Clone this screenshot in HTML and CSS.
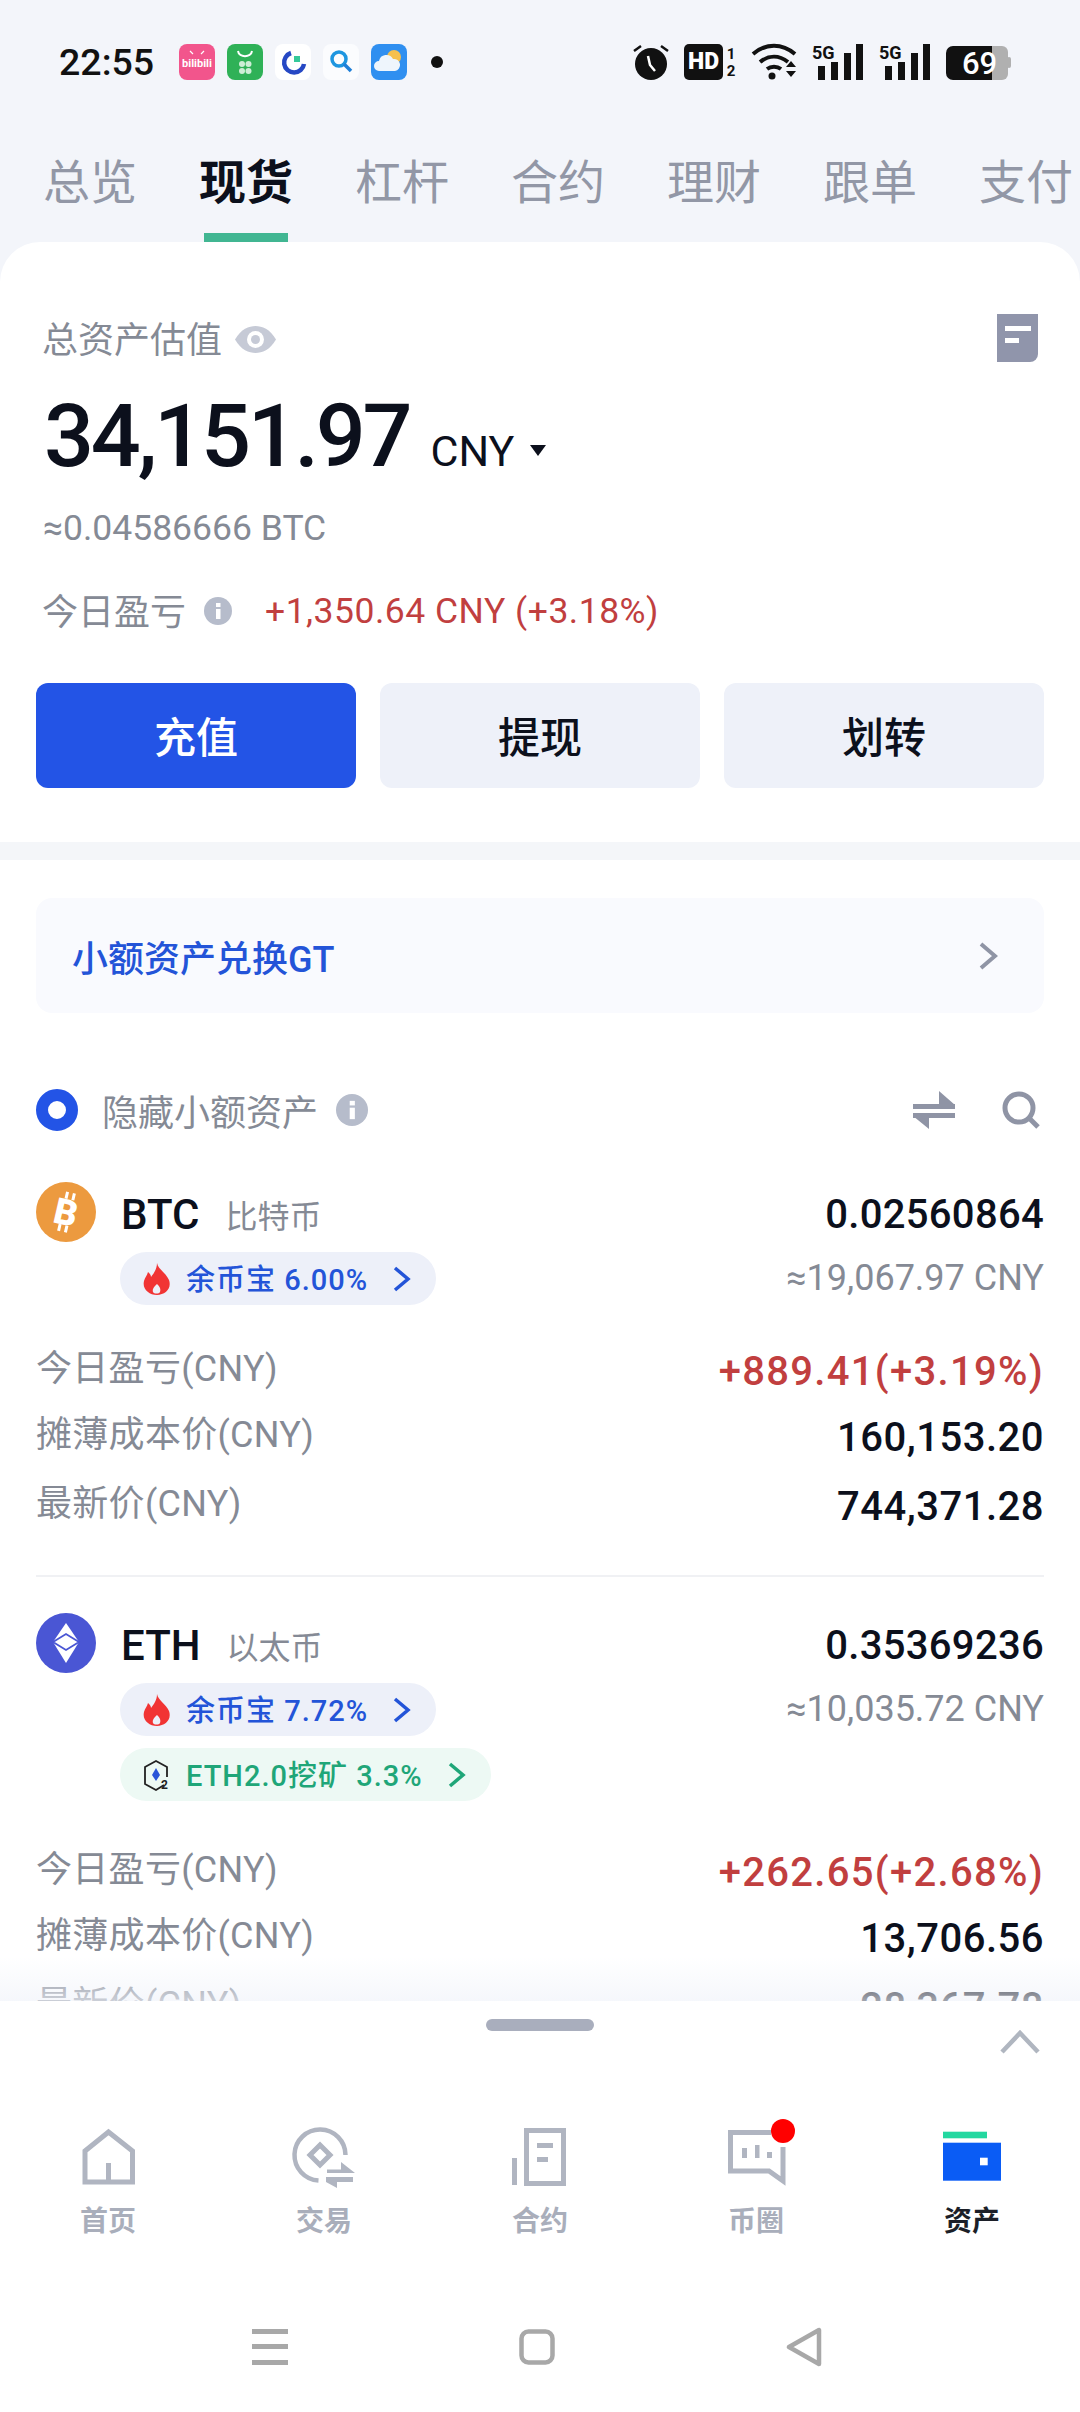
FILE: index.html
```html
<!DOCTYPE html>
<html lang="zh-CN">
<head>
    <meta charset="UTF-8">
    <meta name="viewport" content="width=device-width, initial-scale=1.0">
    <title>资产</title>
    <link rel="stylesheet" href="styles.css">
</head>
<body>
<div class="phone">
    <!-- Status bar -->
    <div class="status">
        <span class="time">22:55</span>
        <div class="app_icons">
            <svg class="app" viewBox="0 0 36 36"><rect width="36" height="36" rx="8" fill="#f2558c"/><path d="M11 7l3 3M25 7l-3 3" stroke="#fff" stroke-width="1.2"/><text x="18" y="23" class="bili">bilibili</text></svg>
            <svg class="app" viewBox="0 0 36 36"><rect width="36" height="36" rx="8" fill="#2fb157"/><path d="M11 7c1 7 13 7 14 0" fill="none" stroke="#fff" stroke-width="2"/><g fill="#cdeed6"><circle cx="15" cy="20" r="3"/><circle cx="21.500" cy="20" r="3"/><circle cx="15" cy="27" r="3"/><circle cx="21.500" cy="27" r="3"/></g></svg>
            <svg class="app" viewBox="0 0 36 36"><rect width="36" height="36" rx="8" fill="#fff"/><path d="M16 9a10 10 0 1 0 13 11" fill="none" stroke="#2648c4" stroke-width="4.500"/><rect x="19" y="12" width="6" height="6" fill="#35c99a"/></svg>
            <svg class="app" viewBox="0 0 36 36"><rect width="36" height="36" rx="8" fill="#fbfcfe"/><circle cx="16" cy="15" r="7" fill="none" stroke="#1e96e0" stroke-width="3.500"/><path d="M21 20l7 7" stroke="#1e7fd8" stroke-width="3.500"/></svg>
            <svg class="app" viewBox="0 0 36 36"><rect width="36" height="36" rx="8" fill="#2f8ff0"/><circle cx="23" cy="13" r="7" fill="#f6c04d"/><path d="M8 27a5 5 0 0 1 0-10 7.500 7.500 0 0 1 14-2 6 6 0 0 1 2 12z" fill="#eef5fc"/></svg>
            <span class="dot"></span>
        </div>
        <div class="sys_icons">
            <svg width="36" height="36" viewBox="0 0 36 36"><path d="M1 7l7-5M35 7l-7-5" stroke="#111" stroke-width="2.500"/><circle cx="18" cy="20" r="16" fill="#111"/><path d="M15 12l2 9 5 6" fill="none" stroke="#fff" stroke-width="2.500"/></svg>
            <svg width="52" height="36" viewBox="0 0 52 36"><rect width="39" height="36" rx="5" fill="#111"/><text x="19.500" y="25" class="hd">HD</text><text x="47" y="15" class="hd_num">1</text><text x="47" y="32" class="hd_num">2</text></svg>
            <svg width="46" height="38" viewBox="0 0 46 38"><g fill="none" stroke="#111" stroke-width="4"><path d="M2 11c13-11 29-11 42 0"/><path d="M9 19c9-7 19-7 28 0"/><path d="M16 26c4-3 10-3 14 0"/></g><circle cx="21" cy="33" r="3.500" fill="#111"/><path d="M35 24l5-6 5 6zM35 28l5 6 5-6z" fill="#111"/></svg>
            <svg class="signal" width="52" height="40" viewBox="0 -4 52 40"><text x="0" y="15" class="five_g">5G</text><g fill="#111"><rect x="6" y="22" width="7" height="14"/><rect x="19" y="18" width="7" height="18"/><rect x="32" y="9" width="7" height="27"/><rect x="44" y="0" width="7" height="36"/></g></svg>
            <svg class="signal" width="52" height="40" viewBox="0 -4 52 40"><text x="0" y="15" class="five_g">5G</text><g fill="#111"><rect x="6" y="22" width="7" height="14"/><rect x="19" y="18" width="7" height="18"/><rect x="32" y="9" width="7" height="27"/><rect x="44" y="0" width="7" height="36"/></g></svg>
            <svg class="battery" width="66" height="42" viewBox="0 0 66 42"><rect x="30" y="2" width="32" height="34" rx="6" fill="#b0b0b0"/><rect x="61" y="13" width="4" height="11" rx="2" fill="#b0b0b0"/><path d="M7 2h39v34H7a7 7 0 0 1-7-7V9a7 7 0 0 1 7-7z" fill="#111"/><text x="16" y="30" class="batt">69</text></svg>
        </div>
    </div>

    <!-- Tabs -->
    <div class="tabs">
        <div class="tab">总览</div>
        <div class="tab active">现货<span class="tab_bar"></span></div>
        <div class="tab">杠杆</div>
        <div class="tab">合约</div>
        <div class="tab">理财</div>
        <div class="tab">跟单</div>
        <div class="tab">支付</div>
    </div>

    <div class="card">
        <!-- Balance overview -->
        <div class="overview">
            <div class="total_row">
                <div class="total_left">
                    <span class="label">总资产估值</span>
                    <svg class="eye" width="41" height="27" viewBox="0 0 41 27"><path d="M0 13.500C6 3 14 0 20.500 0S35 3 41 13.500C35 24 27 27 20.500 27S6 24 0 13.500z" fill="#c6cad6"/><circle cx="20.500" cy="13.500" r="8.500" fill="#fff"/><circle cx="20.500" cy="13.500" r="4.500" fill="#c6cad6"/></svg>
                </div>
                <svg width="41" height="48" viewBox="0 0 41 48"><path d="M0 0h41v40a8 8 0 0 1-8 8H0z" fill="#9095ab"/><rect x="8" y="12" width="26" height="5" fill="#fff"/><rect x="8" y="24" width="14" height="5" fill="#fff"/></svg>
            </div>
            <div class="amount_row">
                <span class="amount">34,151.97</span>
                <span class="currency">CNY</span>
                <span class="caret"></span>
            </div>
            <div class="label btc_value">≈0.04586666 BTC</div>
            <div class="pnl_row">
                <span class="label">今日盈亏</span>
                <svg class="info" width="28" height="28" viewBox="0 0 28 28"><circle cx="14" cy="14" r="14" fill="#b6bccb"/><rect x="12" y="12" width="4.500" height="10" fill="#fff"/><rect x="12" y="6" width="4.500" height="4" fill="#fff"/></svg>
                <span class="pnl_value">+1,350.64 CNY (+3.18%)</span>
            </div>
            <div class="actions">
                <div class="btn primary">充值</div>
                <div class="btn">提现</div>
                <div class="btn">划转</div>
            </div>
        </div>

        <div class="section_gap"></div>

        <!-- Asset list -->
        <div class="assets">
            <div class="convert">
                <span>小额资产兑换GT</span>
                <svg width="20" height="28" viewBox="0 0 20 28"><path d="M3 2l14 12L3 26" fill="none" stroke="#8f94a5" stroke-width="4"/></svg>
            </div>

            <div class="filter_row">
                <div class="filter_left">
                    <span class="radio"></span>
                    <span class="label">隐藏小额资产</span>
                    <svg class="info" width="32" height="32" viewBox="0 0 28 28"><circle cx="14" cy="14" r="14" fill="#b6bccb"/><rect x="12" y="12" width="4.500" height="10" fill="#fff"/><rect x="12" y="6" width="4.500" height="4" fill="#fff"/></svg>
                </div>
                <div class="filter_right">
                    <svg width="42" height="38" viewBox="0 0 42 38"><path d="M0 13h42v5H0zM0 22h42v5H0z" fill="#8f94a5"/><path d="M26 0l16 14H26zM16 38L0 25h16z" fill="#8f94a5"/></svg>
                    <svg width="38" height="38" viewBox="0 0 38 38"><circle cx="17" cy="17" r="14" fill="none" stroke="#8f94a5" stroke-width="5"/><path d="M27 27l9 9" stroke="#8f94a5" stroke-width="5"/></svg>
                </div>
            </div>

            <div class="asset">
                <div class="asset_head">
                    <svg class="coin" viewBox="0 0 60 60"><circle cx="30" cy="30" r="30" fill="#ec9a3f"/><g transform="rotate(13 30 30)"><path d="M27 10v7M34 10v7M27 43v7M34 43v7" stroke="#fff" stroke-width="3"/><text x="30" y="43" class="btc_b">B</text></g></svg>
                    <div class="asset_left">
                        <div class="name_row"><span class="symbol">BTC</span><span class="coin_name">比特币</span></div>
                        <div class="pill blue">
                            <svg class="flame" viewBox="0 0 27 32"><path d="M14 0c1 6 9 10 12 17 3 9-4 15-12 15S-1 26 1 18c1-4 3-5 4-9 2 2 3 3 3 5 3-4 6-8 6-14z" fill="#f13434"/><path d="M14 21c3 3 4 5 3 8-1 2-6 2-7 0-1-3 1-5 4-8z" fill="#edf0f9"/></svg>
                            <span class="pill_text">余币宝 6.00%</span>
                            <svg class="pill_arrow" viewBox="0 0 18 26"><path d="M2 2l13 11L2 24" fill="none" stroke="currentColor" stroke-width="3.500"/></svg>
                        </div>
                    </div>
                    <div class="asset_right">
                        <div class="qty">0.02560864</div>
                        <div class="label approx">≈19,067.97 CNY</div>
                    </div>
                </div>
                <div class="details">
                    <div class="detail"><span class="label">今日盈亏(CNY)</span><span class="val red">+889.41(+3.19%)</span></div>
                    <div class="detail"><span class="label">摊薄成本价(CNY)</span><span class="val">160,153.20</span></div>
                    <div class="detail last"><span class="label">最新价(CNY)</span><span class="val">744,371.28</span></div>
                </div>
            </div>

            <div class="asset no_line">
                <div class="asset_head">
                    <svg class="coin" viewBox="0 0 60 60"><circle cx="30" cy="30" r="30" fill="#4a56d4"/><path d="M30 10l13 19-13 21-13-21z" fill="#fff"/><path d="M17 29l13-8 13 8-13 8z" fill="#fff" stroke="#4a56d4" stroke-width="1.800"/></svg>
                    <div class="asset_left">
                        <div class="name_row"><span class="symbol">ETH</span><span class="coin_name">以太币</span></div>
                        <div class="pill blue">
                            <svg class="flame" viewBox="0 0 27 32"><path d="M14 0c1 6 9 10 12 17 3 9-4 15-12 15S-1 26 1 18c1-4 3-5 4-9 2 2 3 3 3 5 3-4 6-8 6-14z" fill="#f13434"/><path d="M14 21c3 3 4 5 3 8-1 2-6 2-7 0-1-3 1-5 4-8z" fill="#edf0f9"/></svg>
                            <span class="pill_text">余币宝 7.72%</span>
                            <svg class="pill_arrow" viewBox="0 0 18 26"><path d="M2 2l13 11L2 24" fill="none" stroke="currentColor" stroke-width="3.500"/></svg>
                        </div>
                        <div class="pill green">
                            <svg class="flame" viewBox="0 0 27 32"><path d="M21 26l-8 5-11-6V8l11-6 11 6v10" fill="none" stroke="#222" stroke-width="1.800"/><path d="M13 9l4 7-4 6-4-6z" fill="#2a55d8"/><text x="22" y="30" class="eth_two">2</text></svg>
                            <span class="pill_text">ETH2.0挖矿 3.3%</span>
                            <svg class="pill_arrow" viewBox="0 0 18 26"><path d="M2 2l13 11L2 24" fill="none" stroke="currentColor" stroke-width="3.500"/></svg>
                        </div>
                    </div>
                    <div class="asset_right">
                        <div class="qty">0.35369236</div>
                        <div class="label approx">≈10,035.72 CNY</div>
                    </div>
                </div>
                <div class="details">
                    <div class="detail"><span class="label">今日盈亏(CNY)</span><span class="val red">+262.65(+2.68%)</span></div>
                    <div class="detail"><span class="label">摊薄成本价(CNY)</span><span class="val">13,706.56</span></div>
                    <div class="detail last"><span class="label">最新价(CNY)</span><span class="val">28,367.78</span></div>
                </div>
            </div>
        </div>
    </div>

    <!-- Bottom sheet over the list -->
    <div class="sheet">
        <div class="handle"></div>
        <svg class="sheet_up" width="40" height="24" viewBox="0 0 40 24"><path d="M2 22L20 3l18 19" fill="none" stroke="#b0b6c0" stroke-width="4.500"/></svg>
        <div class="nav">
            <div class="nav_item">
                <svg class="nav_icon" viewBox="0 0 60 60"><path d="M30.500 5L7 24v31h47.500V24z" fill="none" stroke="#b0b5c1" stroke-width="5"/><path d="M30.500 36v19" stroke="#b0b5c1" stroke-width="5"/></svg>
                <span>首页</span>
            </div>
            <div class="nav_item">
                <svg class="nav_icon" viewBox="0 0 60 60"><path d="M51.500 28A25.500 25.500 0 1 0 24.500 53.500" fill="none" stroke="#b0b5c1" stroke-width="4.500"/><path d="M26 18l10 10-10 10-10-10z" fill="none" stroke="#b0b5c1" stroke-width="5"/><path d="M33 42.500h14V35l14 11H33zM32 50h27v5H43v6L32 55z" fill="#b0b5c1"/></svg>
                <span>交易</span>
            </div>
            <div class="nav_item">
                <svg class="nav_icon" viewBox="0 0 60 60"><rect x="16.500" y="3.500" width="37" height="53" fill="none" stroke="#b0b5c1" stroke-width="5"/><g fill="#b0b5c1"><rect x="2" y="31" width="5" height="27"/><rect x="27" y="16" width="16" height="5"/><rect x="27" y="30" width="11" height="5"/></g></svg>
                <span>合约</span>
            </div>
            <div class="nav_item">
                <svg class="nav_icon" viewBox="0 0 60 60"><path d="M45 5.500H4.500V44H43l14 10V20" fill="none" stroke="#b0b5c1" stroke-width="5"/><g fill="#b0b5c1"><rect x="16" y="21" width="5" height="10"/><rect x="29" y="18" width="4.500" height="13"/><rect x="41" y="25" width="5" height="6"/></g><circle cx="57" cy="4" r="12" fill="#f00"/></svg>
                <span>币圈</span>
            </div>
            <div class="nav_item current">
                <svg class="nav_icon" viewBox="0 0 60 60"><rect x="1" y="4.700" width="44" height="6.600" fill="#23d8a0"/><rect x="1" y="15.700" width="58" height="38" fill="#0a5cf5"/><rect x="38" y="30.700" width="7.700" height="7.600" fill="#fff"/></svg>
                <span>资产</span>
            </div>
        </div>
        <div class="sysnav">
            <svg width="36" height="36" viewBox="0 0 36 36"><path d="M0 0h36v5H0zM0 15h36v5H0zM0 31h36v5H0z" fill="#a8a8a8"/></svg>
            <svg width="36" height="36" viewBox="0 0 36 36"><rect x="2.500" y="2.500" width="31" height="31" rx="7" fill="none" stroke="#a8a8a8" stroke-width="4.500"/></svg>
            <svg width="36" height="40" viewBox="0 0 36 40"><path d="M33 3v34L3 20z" fill="none" stroke="#a8a8a8" stroke-width="4.500" stroke-linejoin="round"/></svg>
        </div>
    </div>
</div>
</body>
</html>
```

FILE: styles.css
```css
* {
    margin: 0;
    padding: 0;
    box-sizing: border-box;
}

body {
    background-color: #f3f5fa;
    font-family: Roboto, "Noto Sans CJK SC", sans-serif;
}

.phone {
    position: relative;
    width: 1080px;
    height: 2412px;
    overflow: hidden;
    background-color: #f3f5fa;
}

/* Status bar */
.status {
    display: flex;
    align-items: center;
    height: 124px;
    padding-left: 59px;
}

.time {
    width: 120px;
    font-size: 37.500px;
    font-weight: 500;
    color: #111;
}

.app_icons {
    display: flex;
    align-items: center;
    gap: 12px;
}

.app {
    width: 36px;
    height: 36px;
}

.bili {
    font-size: 11px;
    font-weight: 700;
    fill: #fff;
    text-anchor: middle;
}

.dot {
    width: 12px;
    height: 12px;
    margin-left: 12px;
    border-radius: 50%;
    background-color: #111;
}

.sys_icons {
    display: flex;
    align-items: center;
    gap: 15px;
    margin-left: 190px;
}

/* taller boxes so the glyphs are not clipped, the margins keep the row centered */
.signal {
    margin-top: -4px;
}

.battery {
    margin-bottom: -6px;
}

.hd {
    font-size: 23px;
    font-weight: 900;
    fill: #fff;
    text-anchor: middle;
}

.hd_num {
    font-size: 15px;
    font-weight: 700;
    fill: #111;
    text-anchor: middle;
}

.five_g {
    font-size: 18px;
    font-weight: 700;
    fill: #111;
}

.batt {
    font-size: 31px;
    font-weight: 500;
    fill: #fff;
}

/* Tabs */
.tabs {
    display: flex;
    gap: 62px;
    height: 118px;
    padding-left: 43px;
    overflow: hidden;
}

.tab {
    display: flex;
    flex-direction: column;
    align-items: center;
    flex-shrink: 0;
    padding-top: 27px;
    font-size: 47px;
    line-height: 64px;
    color: #9297a6;
}

.tab.active {
    color: #0c101c;
    font-weight: 700;
}

.tab_bar {
    width: 84px;
    height: 9px;
    margin-top: auto;
    background-color: #41b692;
}

/* Card */
.card {
    background-color: #fff;
    border-radius: 40px 40px 0 0;
}

.label {
    font-size: 36px;
    color: #858a95;
}

.overview {
    height: 600px;
    padding: 72px 36px 0 44px;
}

.total_row {
    display: flex;
    justify-content: space-between;
    align-items: flex-start;
    height: 50px;
    padding-right: 6px;
}

.total_left {
    display: flex;
    align-items: center;
    gap: 13px;
    height: 50px;
    margin-left: -2px;
}

.total_left .label {
    transform: translateY(-2px);
}

.amount_row {
    display: flex;
    align-items: baseline;
    height: 80px;
    margin-top: 32px;
    line-height: 80px;
    color: #0c101c;
}

.amount {
    font-size: 88px;
    font-weight: 500;
    letter-spacing: -3.200px;
}

.currency {
    margin-left: 21px;
    font-size: 43px;
    font-weight: 400;
}

.caret {
    width: 0;
    height: 0;
    margin-left: 16px;
    border-left: 8px solid transparent;
    border-right: 8px solid transparent;
    border-top: 11px solid #0c101c;
    transform: translateY(-10px);
}

.btc_value {
    height: 44px;
    margin-top: 30px;
    margin-left: -1px;
    font-size: 35.500px;
    line-height: 44px;
}

.pnl_row {
    display: flex;
    align-items: center;
    height: 44px;
    margin-top: 39px;
    margin-left: -2px;
}

.pnl_row .label {
    transform: translateY(-2px);
}

.info {
    margin-left: 18px;
}

.pnl_value {
    margin-left: 33px;
    font-size: 35.500px;
    letter-spacing: 0.500px;
    color: #c13f3f;
}

.actions {
    display: flex;
    gap: 24px;
    margin: 50px 0 0 -8px;
}

.btn {
    display: flex;
    justify-content: center;
    align-items: center;
    width: 320px;
    height: 105px;
    padding-bottom: 2px;
    border-radius: 12px;
    background-color: #eef1f9;
    font-size: 42px;
    font-weight: 500;
    color: #0c101c;
}

.btn.primary {
    background-color: #2354e6;
    color: #fff;
}

.section_gap {
    height: 18px;
    background-color: #f4f6f9;
}

/* Asset list */
.assets {
    padding: 38px 36px 0;
}

.convert {
    display: flex;
    justify-content: space-between;
    align-items: center;
    height: 115px;
    padding: 0 46px 0 36px;
    border-radius: 16px;
    background-color: #f9fafe;
    font-size: 36px;
    font-weight: 500;
    color: #2354d8;
}

.filter_row {
    display: flex;
    justify-content: space-between;
    align-items: center;
    height: 42px;
    margin-top: 76px;
}

.filter_left {
    display: flex;
    align-items: center;
}

.radio {
    width: 42px;
    height: 42px;
    margin-right: 24px;
    border: 12px solid #2354e6;
    border-radius: 50%;
}

.filter_right {
    display: flex;
    align-items: center;
    gap: 47px;
    padding-right: 4px;
}

.asset {
    margin-top: 51px;
    padding-bottom: 33px;
    border-bottom: 2px solid #f0f1f4;
}

.asset.no_line {
    margin-top: 36px;
    border-bottom: none;
}

.asset_head {
    display: flex;
    align-items: flex-start;
}

.coin {
    width: 60px;
    height: 60px;
    flex-shrink: 0;
}

.btc_b {
    font-size: 36px;
    font-weight: 900;
    fill: #fff;
    text-anchor: middle;
}

.eth_two {
    font-size: 12px;
    font-weight: 700;
    fill: #222;
    text-anchor: middle;
}

.asset_left {
    flex: 1;
    padding-left: 24px;
}

.name_row {
    display: flex;
    align-items: center;
    height: 66px;
    margin-left: 1px;
    padding-bottom: 2px;
}

.symbol {
    font-size: 42px;
    font-weight: 500;
    color: #0c101c;
}

.coin_name {
    margin-left: 26px;
    font-size: 32px;
    color: #858a95;
}

.pill {
    display: flex;
    align-items: center;
    width: fit-content;
    height: 53px;
    margin-top: 4px;
    padding: 0 25px 0 23px;
    border-radius: 27px;
    font-size: 29px;
    font-weight: 500;
    letter-spacing: 1px;
}

.pill.blue {
    background-color: #edf0f9;
    color: #2354d8;
}

.pill.green {
    margin-top: 12px;
    margin-bottom: 5px;
    background-color: #edf9f4;
    color: #1fa678;
}

.pill_text {
    margin-left: -1px;
    padding-bottom: 3px;
}

.flame {
    width: 27px;
    height: 32px;
    margin-right: 17px;
}

.pill_arrow {
    width: 18px;
    height: 26px;
    margin-left: 25px;
}

.asset_right {
    text-align: right;
}

.qty {
    height: 66px;
    font-size: 40px;
    font-weight: 500;
    letter-spacing: 0.300px;
    line-height: 66px;
    color: #0c101c;
}

.approx {
    height: 53px;
    margin-top: 4px;
    line-height: 53px;
}

.details {
    margin-top: 34px;
}

.detail {
    display: flex;
    justify-content: space-between;
    height: 66px;
    line-height: 66px;
}

.detail.last {
    height: 68px;
    margin-top: 3px;
}

.detail .label {
    letter-spacing: 0.300px;
    transform: translateY(-3px);
}

.val {
    font-size: 40px;
    font-weight: 500;
    letter-spacing: 0.500px;
    color: #0c101c;
}

.val.red {
    letter-spacing: 1.300px;
    color: #c13f3f;
}

/* Bottom sheet */
.sheet {
    position: absolute;
    left: 0;
    right: 0;
    bottom: 0;
    height: 411px;
    padding-top: 18px;
    border-radius: 36px 36px 0 0;
    background-color: #fff;
}

.sheet::before {
    content: "";
    position: absolute;
    left: 0;
    right: 0;
    bottom: 100%;
    height: 44px;
    background: linear-gradient(to bottom, rgba(240, 243, 250, 0), rgba(240, 243, 250, 0.65));
}

.handle {
    width: 108px;
    height: 12px;
    margin: 0 auto;
    border-radius: 6px;
    background-color: #a9aebd;
}

.sheet_up {
    position: absolute;
    top: 29px;
    right: 40px;
}

.nav {
    display: flex;
    margin-top: 96px;
}

.nav_item {
    display: flex;
    flex-direction: column;
    align-items: center;
    flex: 1;
    font-size: 28px;
    font-weight: 700;
    line-height: 40px;
    color: #a9aebb;
}

.nav_item.current {
    color: #1c1f28;
}

.nav_icon {
    width: 60px;
    height: 60px;
    margin-bottom: 15px;
    overflow: visible;
}

.sysnav {
    display: flex;
    align-items: center;
    gap: 231px;
    margin-top: 85px;
    padding-left: 252px;
}
```
